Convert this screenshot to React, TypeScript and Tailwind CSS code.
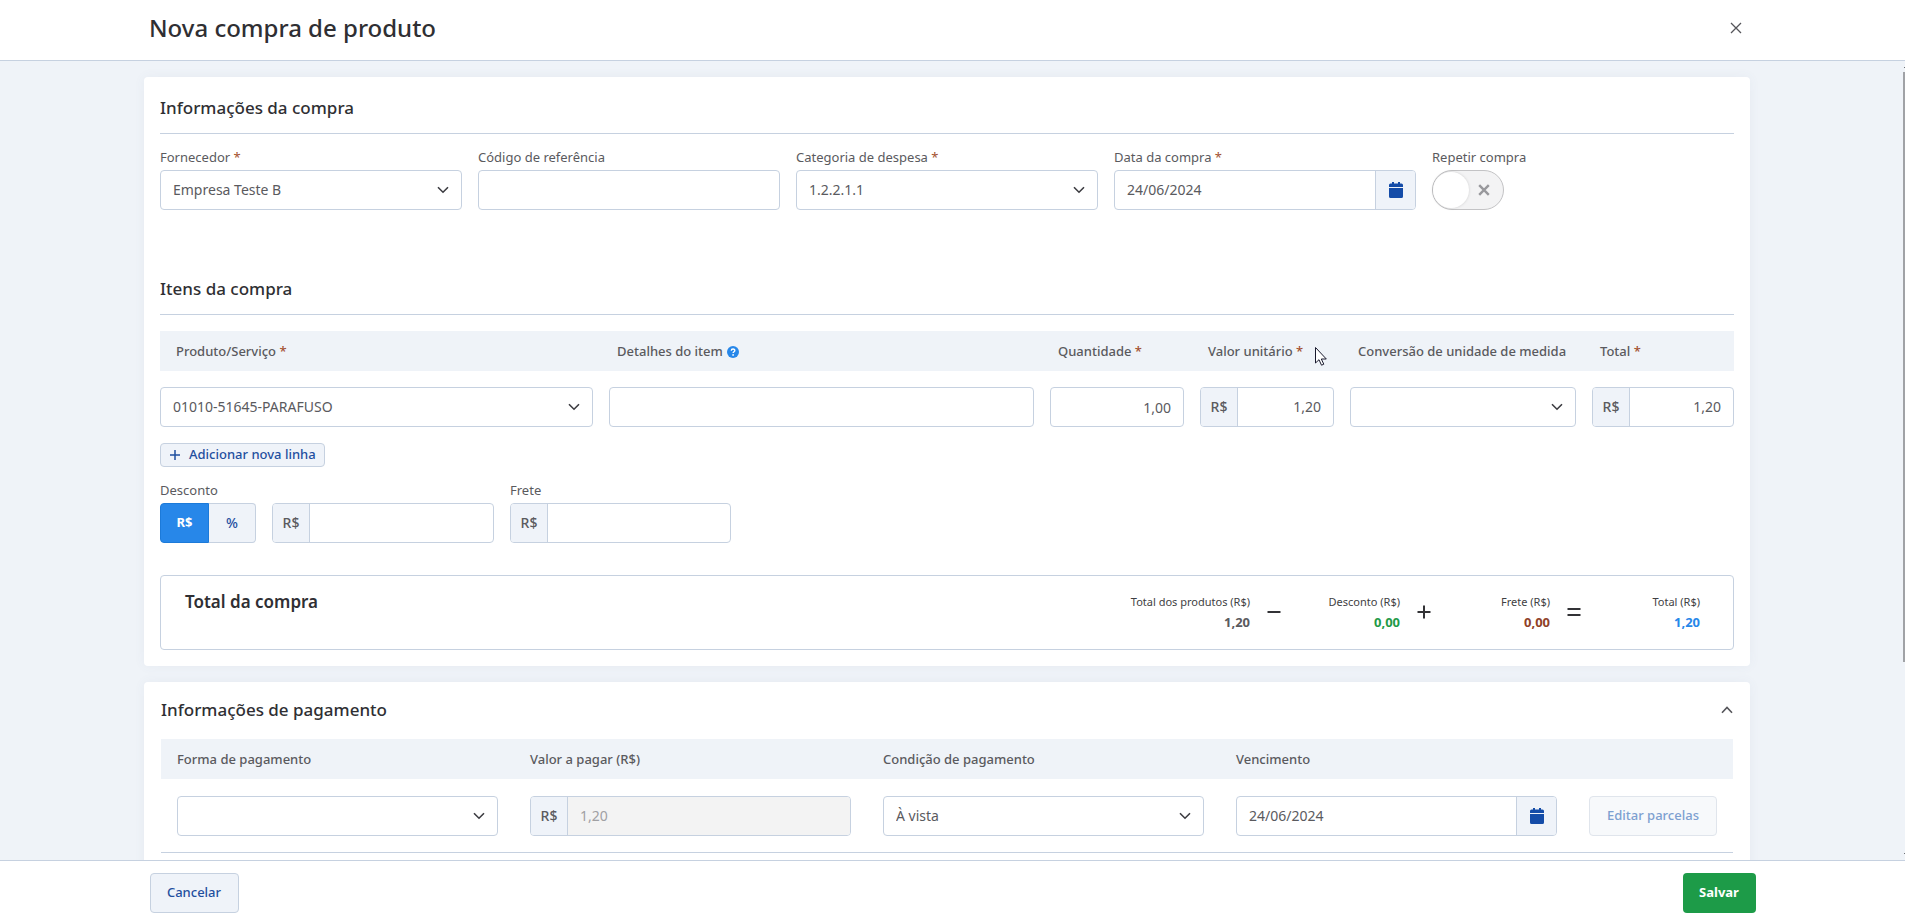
import React, { ReactNode } from "react";

const FIELD =
  "block h-10 w-full min-w-0 rounded-[4px] border border-[#c6d1e0] bg-white px-3 text-sm text-[#5a5a5e] outline-none";

function Star() {
  return <span className="text-[#a3502f]"> *</span>;
}

function Chevron() {
  return (
    <svg viewBox="0 0 12 8" className="pointer-events-none absolute right-[13px] top-4 h-2 w-3" fill="none" stroke="#3b3b40" strokeWidth="1.6">
      <path d="M1 1.2 6 6.2 11 1.2" />
    </svg>
  );
}

function Select({ id, value, label }: { id: string; value: string; label?: string }) {
  return (
    <div className="relative">
      <select id={id} aria-label={label} defaultValue={value} className={`${FIELD} appearance-none pr-8`}>
        <option value={value}>{value}</option>
      </select>
      <Chevron />
    </div>
  );
}

function DateInput({ id, label }: { id: string; label?: string }) {
  return (
    <div className="flex h-10 rounded-[4px] border border-[#c6d1e0] bg-white">
      <input id={id} aria-label={label} defaultValue="24/06/2024" className="min-w-0 flex-1 rounded-l-[4px] px-3 text-sm text-[#5a5a5e] outline-none" />
      <button type="button" aria-label="Abrir calendário" className="flex w-10 items-center justify-center rounded-r-[3px] border-l border-[#c6d1e0] bg-[#eff3f9]">
        <svg viewBox="0 0 14 16" className="h-4 w-[14px]" fill="#144ca8">
          <path d="M3 0h2v1.500h4V0h2v1.500h1.500A1.500 1.500 0 0 1 14 3v2H0V3a1.500 1.500 0 0 1 1.500-1.500H3zM0 6h14v8.500a1.500 1.500 0 0 1-1.500 1.500h-11A1.500 1.500 0 0 1 0 14.500z" />
        </svg>
      </button>
    </div>
  );
}

function MoneyInput({ id, value = "", label, disabled, right }: { id: string; value?: string; label?: string; disabled?: boolean; right?: boolean }) {
  return (
    <div className="flex h-10 overflow-hidden rounded-[4px] border border-[#c6d1e0] bg-white">
      <span className="flex w-[37px] shrink-0 items-center justify-center border-r border-[#c6d1e0] bg-[#eff3f9] text-sm font-medium text-[#5a5a5e]">R$</span>
      <input
        id={id}
        aria-label={label}
        defaultValue={value}
        disabled={disabled}
        className={`min-w-0 flex-1 px-3 text-sm outline-none ${disabled ? "bg-[#f3f3f3] text-[#a0a0a3]" : "text-[#5a5a5e]"} ${right ? "text-right" : ""}`}
      />
    </div>
  );
}

function Field({ id, label, required, children }: { id: string; label: string; required?: boolean; children: ReactNode }) {
  return (
    <div>
      <label htmlFor={id} className="mb-[3px] block text-[13px] leading-5 text-[#5a5a5e]">
        {label}
        {required && <Star />}
      </label>
      {children}
    </div>
  );
}

function Heading({ children }: { children: ReactNode }) {
  return <h2 className="border-b border-[#c6d1e0] pb-[13px] text-[17px] font-medium leading-6 text-[#2f2f33]">{children}</h2>;
}

function Operator({ path }: { path: string }) {
  return (
    <svg viewBox="0 0 14 14" className="h-[14px] w-[14px]" stroke="#333336" strokeWidth="2">
      <path d={path} />
    </svg>
  );
}

function Sum({ label, value, tone, path }: { label: string; value: string; tone: string; path?: string }) {
  return (
    <div className={`flex items-center justify-end ${path ? "w-[150px]" : "w-[102px]"}`}>
      <dl className="text-right">
        <dt className="whitespace-nowrap text-[11px] leading-5 text-[#3f3f43]">{label}</dt>
        <dd className={`text-[13px] font-bold leading-5 ${tone}`}>{value}</dd>
      </dl>
      {path && (
        <span className="flex w-12 shrink-0 justify-center">
          <Operator path={path} />
        </span>
      )}
    </div>
  );
}

const TH = "px-4 pt-0.5 text-left text-[13px] font-medium whitespace-nowrap text-[#5a5a5e]";

export default function App() {
  return (
    <div className="relative flex h-screen flex-col overflow-hidden bg-white font-['Noto_Sans','Open_Sans',sans-serif]">
      <header className="shrink-0 border-b border-[#c6d1e0] px-4">
        <div className="mx-auto flex max-w-[1607px] items-center justify-between pb-4 pr-3 pt-3">
          <h1 className="text-2xl font-medium leading-8 text-[#2f2f33]">Nova compra de produto</h1>
          <button type="button" aria-label="Fechar" className="flex h-4 w-4 items-center justify-center">
            <svg viewBox="0 0 12 12" className="h-3 w-3" fill="none" stroke="#55555a" strokeWidth="1.3">
              <path d="M1 1l10 10M11 1L1 11" />
            </svg>
          </button>
        </div>
      </header>

      <div className="flex min-h-0 flex-1 bg-[#eff3f8]">
        <main className="min-w-0 flex-1 overflow-y-auto px-4 pt-4 [scrollbar-width:none]">
          <section className="mx-auto max-w-[1606px] rounded-[4px] bg-white p-4 shadow-[0_0_12px_rgba(90,110,140,0.06)]">
            <div className="pt-[3px]">
              <Heading>Informações da compra</Heading>
            </div>
            <div className="mt-[13px] grid grid-cols-5 gap-4">
              <Field id="fornecedor" label="Fornecedor" required>
                <Select id="fornecedor" value="Empresa Teste B" />
              </Field>
              <Field id="codigo" label="Código de referência">
                <input id="codigo" className={FIELD} />
              </Field>
              <Field id="categoria" label="Categoria de despesa" required>
                <Select id="categoria" value="1.2.2.1.1" />
              </Field>
              <Field id="data" label="Data da compra" required>
                <DateInput id="data" />
              </Field>
              <Field id="repetir" label="Repetir compra">
                <div className="relative h-10 w-[72px]">
                  <input id="repetir" type="checkbox" role="switch" className="block h-10 w-[72px] appearance-none rounded-full border border-[#c3c3c5] bg-[#f3f3f4]" />
                  <span className="pointer-events-none absolute left-px top-0.5 h-9 w-9 rounded-full bg-white shadow-[0_0_3px_rgba(0,0,0,0.15)]" />
                  <svg viewBox="0 0 12 12" className="pointer-events-none absolute right-[14px] top-[14px] h-3 w-3" stroke="#98989c" strokeWidth="2.4">
                    <path d="M1.200 1.200l9.600 9.600M10.800 1.200l-9.600 9.600" />
                  </svg>
                </div>
              </Field>
            </div>

            <div className="mt-[67px]">
              <Heading>Itens da compra</Heading>
            </div>
            <table className="mt-4 w-full table-fixed">
              <colgroup>
                <col />
                <col />
                <col className="w-[150px]" />
                <col className="w-[150px]" />
                <col className="w-[242px]" />
                <col className="w-[150px]" />
              </colgroup>
              <thead>
                <tr className="h-10 bg-[#eff3f8]">
                  <th className={TH}>Produto/Serviço<Star /></th>
                  <th className={TH}>
                    <span className="flex items-center gap-1">
                      Detalhes do item
                      <svg viewBox="0 0 12 12" className="h-3 w-3">
                        <circle cx="6" cy="6" r="6" fill="#2787e9" />
                        <path d="M4.300 4.700c0-2.300 3.500-2.200 3.500-.2 0 1.200-1.700 1.200-1.700 2.500" fill="none" stroke="#fff" strokeWidth="1.400" />
                        <circle cx="6.100" cy="8.900" r=".9" fill="#fff" />
                      </svg>
                    </span>
                  </th>
                  <th className={TH}>Quantidade<Star /></th>
                  <th className={TH}>Valor unitário<Star /></th>
                  <th className={TH}>Conversão de unidade de medida</th>
                  <th className={TH}>Total<Star /></th>
                </tr>
              </thead>
              <tbody>
                <tr>
                  <td className="pr-2 pt-4"><Select id="produto" label="Produto/Serviço" value="01010-51645-PARAFUSO" /></td>
                  <td className="px-2 pt-4"><input aria-label="Detalhes do item" className={FIELD} /></td>
                  <td className="px-2 pt-4"><input aria-label="Quantidade" defaultValue="1,00" className={`${FIELD} text-right`} /></td>
                  <td className="px-2 pt-4"><MoneyInput id="unitario" label="Valor unitário" value="1,20" right /></td>
                  <td className="px-2 pt-4"><Select id="conversao" label="Conversão de unidade de medida" value="" /></td>
                  <td className="pl-2 pt-4"><MoneyInput id="total" label="Total" value="1,20" right /></td>
                </tr>
              </tbody>
            </table>

            <button type="button" className="mt-4 flex h-6 items-center gap-2 rounded-[4px] border border-[#c6d1e0] bg-[#eff3f9] px-2 text-[13px] font-medium text-[#1f4f9f]">
              <svg viewBox="0 0 12 12" className="h-3 w-3" stroke="#1f4f9f" strokeWidth="1.500">
                <path d="M6 1v10M1 6h10" />
              </svg>
              Adicionar nova linha
            </button>

            <div className="mt-[13px] flex items-end gap-4">
              <fieldset>
                <legend className="mb-[3px] text-[13px] leading-5 text-[#5a5a5e]">Desconto</legend>
                <div className="flex gap-4">
                  <div className="flex h-10 w-24 text-[13px]">
                    <button type="button" aria-pressed="true" className="w-[49px] rounded-l-[4px] border border-[#1c7ad9] bg-[#2787e9] font-bold text-white">R$</button>
                    <button type="button" aria-pressed="false" className="flex-1 rounded-r-[4px] border border-l-0 border-[#c6d1e0] bg-[#eff3f9] text-sm font-medium text-[#1f4f9f]">%</button>
                  </div>
                  <div className="w-[222px]"><MoneyInput id="desconto" label="Desconto" /></div>
                </div>
              </fieldset>
              <div className="w-[221px]">
                <Field id="frete" label="Frete"><MoneyInput id="frete" /></Field>
              </div>
            </div>

            <div className="mt-8 flex items-start justify-between rounded-[4px] border border-[#c6d1e0] pb-[17px] pl-6 pr-[33px] pt-4">
              <h3 className="text-[17px] font-semibold leading-5 text-[#2f2f33]">Total da compra</h3>
              <div className="flex">
                <Sum label="Total dos produtos (R$)" value="1,20" tone="text-[#5a5a5e]" path="M0.500 7h13" />
                <Sum label="Desconto (R$)" value="0,00" tone="text-[#1f9a48]" path="M7 0.500v13M0.500 7h13" />
                <Sum label="Frete (R$)" value="0,00" tone="text-[#8f4128]" path="M0.500 4h13M0.500 10h13" />
                <Sum label="Total (R$)" value="1,20" tone="text-[#2787e9]" />
              </div>
            </div>
          </section>

          <section className="mx-auto mt-4 max-w-[1606px] rounded-[4px] bg-white px-[17px] pb-6 pt-4 shadow-[0_0_12px_rgba(90,110,140,0.06)]">
            <div className="flex items-center justify-between">
              <h2 className="text-[17px] font-medium leading-6 text-[#2f2f33]">Informações de pagamento</h2>
              <button type="button" aria-label="Recolher" className="flex h-6 w-3 items-center">
                <svg viewBox="0 0 12 8" className="h-2 w-3" fill="none" stroke="#55555a" strokeWidth="1.600">
                  <path d="M1 6.800 6 1.500 11 6.800" />
                </svg>
              </button>
            </div>
            <table className="mt-[17px] w-full table-fixed">
              <colgroup>
                <col />
                <col />
                <col />
                <col />
                <col className="w-[160px]" />
              </colgroup>
              <thead>
                <tr className="h-10 bg-[#eff3f8]">
                  <th className={TH}>Forma de pagamento</th>
                  <th className={TH}>Valor a pagar (R$)</th>
                  <th className={TH}>Condição de pagamento</th>
                  <th className={TH}>Vencimento</th>
                  <th />
                </tr>
              </thead>
              <tbody>
                <tr className="border-b border-[#c6d1e0]">
                  <td className="px-4 pb-4 pt-[17px]"><Select id="forma" label="Forma de pagamento" value="" /></td>
                  <td className="px-4 pb-4 pt-[17px]"><MoneyInput id="pagar" label="Valor a pagar (R$)" value="1,20" disabled /></td>
                  <td className="px-4 pb-4 pt-[17px]"><Select id="condicao" label="Condição de pagamento" value="À vista" /></td>
                  <td className="px-4 pb-4 pt-[17px]"><DateInput id="vencimento" label="Vencimento" /></td>
                  <td className="px-4 pb-4 pt-[17px]">
                    <button type="button" disabled className="h-10 w-full whitespace-nowrap rounded-[4px] border border-[#e0e5ec] bg-[#f7f9fb] text-[13px] font-medium text-[#7da0d0]">Editar parcelas</button>
                  </td>
                </tr>
              </tbody>
            </table>
          </section>
        </main>
        <div className="flex w-[11px] shrink-0 flex-col items-end justify-between py-1.5">
          <div className="h-px w-px bg-[#6f7175]" />
          <div className="mb-auto mt-1 h-3/4 w-0.5 bg-[#a0a2a6]" />
          <div className="h-px w-px bg-[#6f7175]" />
        </div>
      </div>

      <footer className="shrink-0 border-t border-[#c6d1e0] px-4">
        <div className="mx-auto flex max-w-[1606px] justify-between pb-0.5 pt-3 text-[13px]">
          <button type="button" className="h-10 w-[89px] rounded-[4px] border border-[#c6d1e0] bg-[#eff3f9] font-medium text-[#1f4f9f]">Cancelar</button>
          <button type="button" className="h-10 w-[73px] rounded-[4px] bg-[#1d9b48] font-bold text-white">Salvar</button>
        </div>
      </footer>

      <svg viewBox="0 0 12 19" className="pointer-events-none absolute left-[1315px] top-[347px] h-[19px] w-3" fill="#fff" stroke="#1a1a2e" strokeWidth="1">
        <path d="M.5.5v15.500l3.500-3.300 2.500 5.500 2.300-1-2.500-5.200h5z" />
      </svg>
    </div>
  );
}
